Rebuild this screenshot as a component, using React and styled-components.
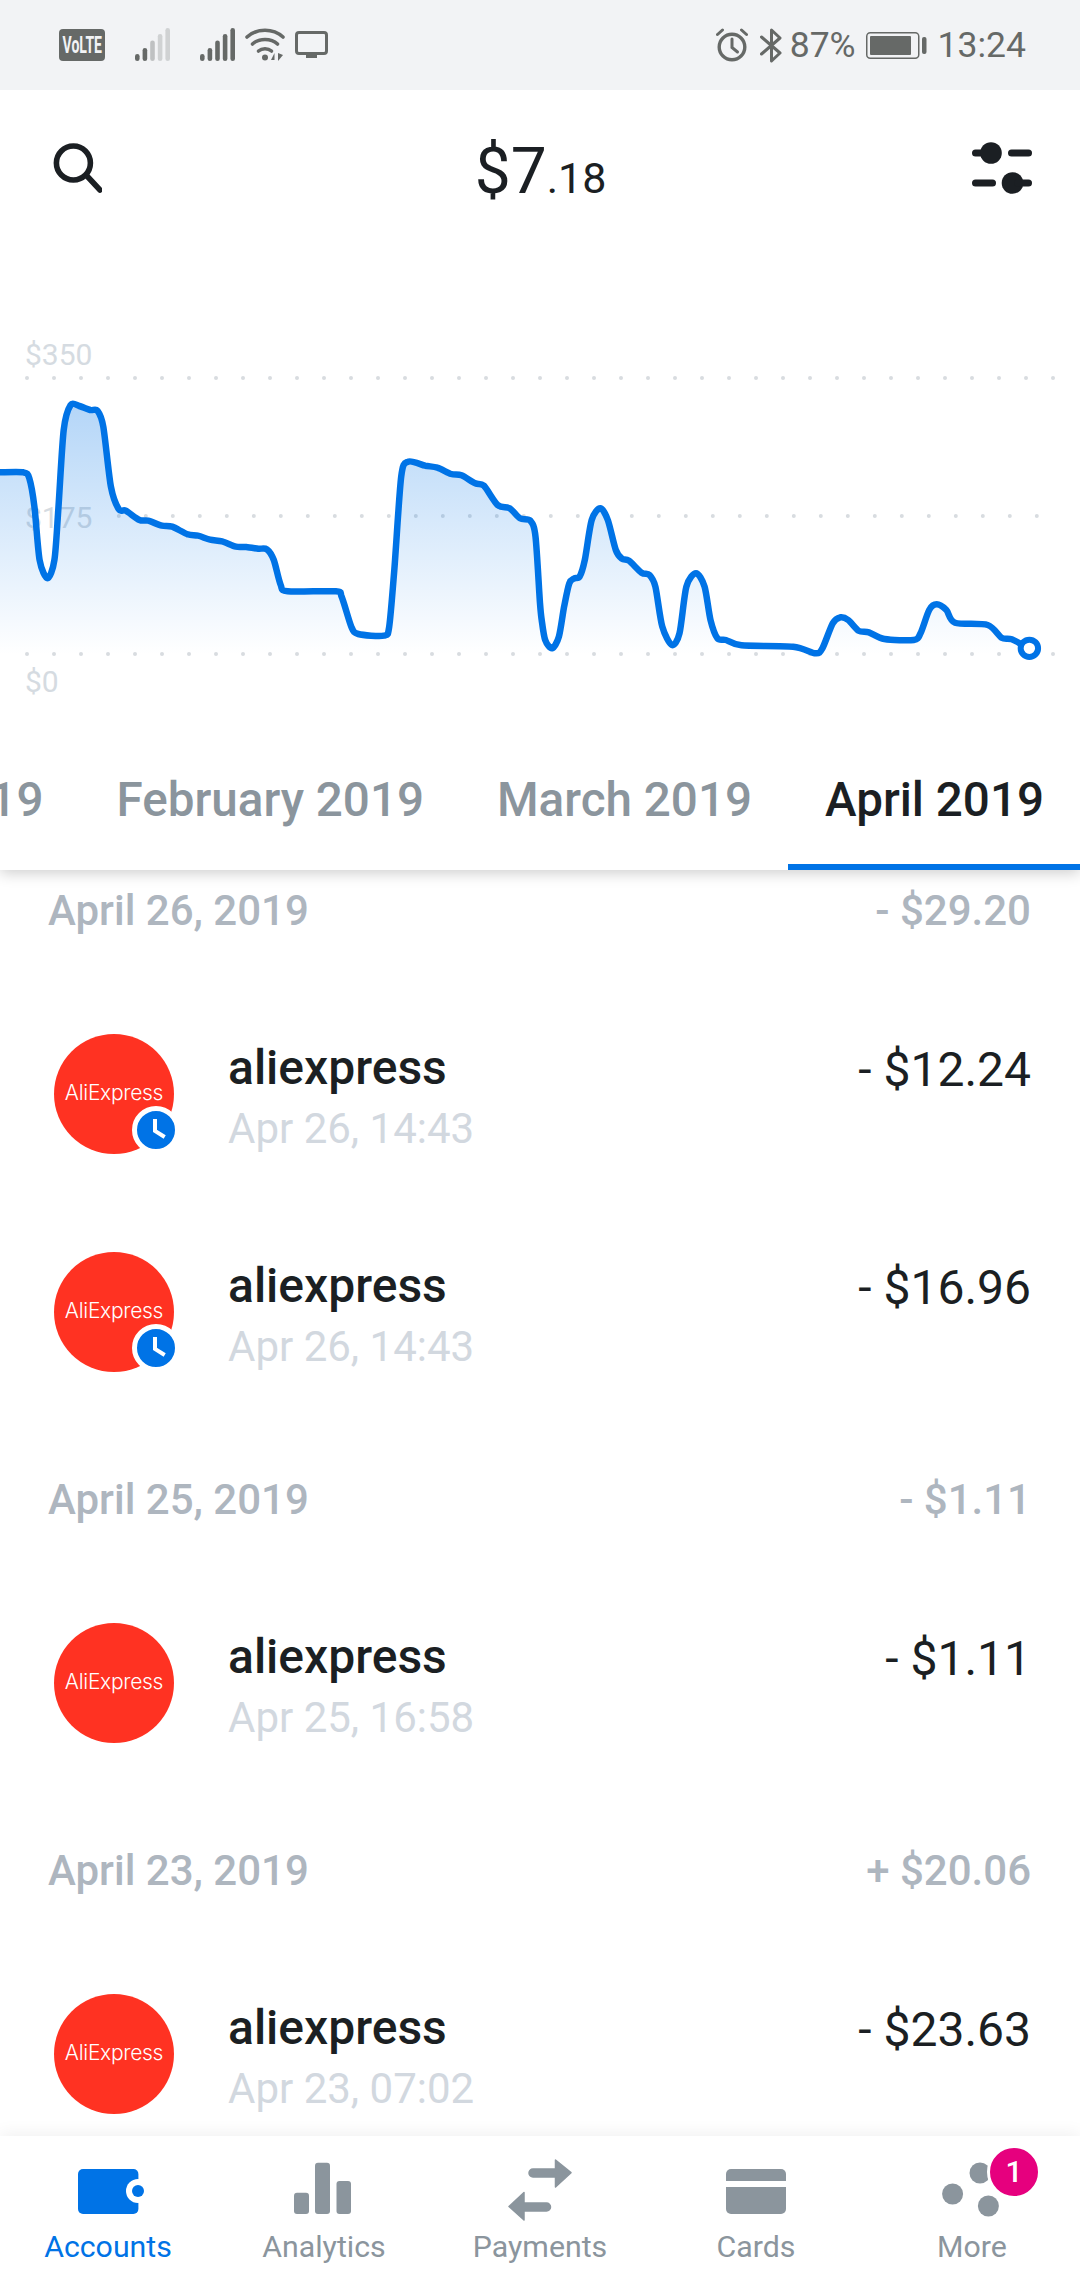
import React from "react";
import styled, { createGlobalStyle } from "styled-components";

const BLUE = "#0073e6";
const DARK = "#1b1f23";
const GREY = "#8b959d";
const ICON = "#666967";

const GlobalStyle = createGlobalStyle`
  html, body {
    margin: 0;
    padding: 0;
    background: #fff;
  }
  * {
    box-sizing: border-box;
  }
`;

const Page = styled.div`
  width: 1080px;
  height: 2280px;
  display: flex;
  flex-direction: column;
  overflow: hidden;
  background: #fff;
  font-family: Roboto, "Liberation Sans", sans-serif;
  color: ${DARK};
`;

/* status bar */
const StatusBar = styled.div`
  flex: none;
  height: 90px;
  display: flex;
  align-items: center;
  justify-content: space-between;
  padding: 0 54px 0 59px;
  background: #f2f3f5;
  color: ${ICON};
`;

const StatusGroup = styled.div`
  display: flex;
  align-items: center;
  gap: ${(p) => p.$gap || 10}px;
`;

const Volte = styled.div`
  width: 46px;
  height: 32px;
  margin-right: 19px;
  border-radius: 4px;
  background: ${ICON};
  color: #f2f3f5;
  display: flex;
  align-items: center;
  justify-content: center;
  font-size: 23px;
  font-weight: 700;
  white-space: nowrap;
  span {
    display: block;
    flex: none;
    transform: scaleX(0.61);
  }
`;

const StatusText = styled.span`
  font-size: 35.5px;
  line-height: 34px;
  margin-left: ${(p) => p.$left || 0}px;
  margin-right: ${(p) => p.$right || 0}px;
`;

const SignalSvg = styled.svg`
  display: block;
  margin-right: ${(p) => p.$right || 0}px;
`;

const Signal = ({ fade, right }) => {
  const tops = [26, 20, 12.5, 6, 0];
  return (
    <SignalSvg width="36" height="34" viewBox="0 0 36 34" $right={right}>
      {tops.map((top, i) => (
        <rect
          key={i}
          x={i * 7.6 + 1}
          y={top}
          width="4.6"
          height={33 - top}
          rx="2.3"
          fill={fade && i > 1 ? (i === 2 ? "#bfc1c2" : "#d0d2d3") : ICON}
        />
      ))}
    </SignalSvg>
  );
};

const Wifi = () => (
  <svg width="40" height="34" viewBox="0 0 40 34" fill="none" stroke={ICON} strokeWidth="3.6" strokeLinecap="round">
    <path d="M2 9 C12 0 28 0 38 9" />
    <path d="M7.5 16 C14 10 26 10 32.5 16" />
    <path d="M13.5 23 C17 20 23 20 26.5 23" />
    <circle cx="20" cy="29.5" r="3" fill={ICON} stroke="none" />
    <path d="M29.5 32 V25 L26 32 Z" fill={ICON} stroke="none" />
    <path d="M33 25 V33 L38 27 Z" fill={ICON} stroke="none" />
  </svg>
);

const Monitor = () => (
  <svg width="33" height="28" viewBox="0 0 33 28" fill="none">
    <rect x="1.5" y="1.5" width="30" height="21" rx="2.5" stroke={ICON} strokeWidth="3" />
    <rect x="11" y="23" width="11" height="4" fill={ICON} />
  </svg>
);

const Alarm = () => (
  <svg width="32" height="34" viewBox="0 0 32 34" fill="none" stroke={ICON} strokeLinecap="round">
    <circle cx="16" cy="19" r="12.8" strokeWidth="3.4" />
    <path d="M16 11 V19.5 L21.5 24" strokeWidth="3" />
    <path d="M1.5 6.5 L6.5 2 M30.5 6.5 L25.5 2" strokeWidth="3" />
  </svg>
);

const Bluetooth = () => (
  <svg width="22" height="35" viewBox="0 0 22 35" fill="none" stroke={ICON} strokeWidth="3" strokeLinejoin="round" strokeLinecap="round">
    <path d="M1.5 9 L20 25 L11.5 33 V2 L20 10 L1.5 26" />
  </svg>
);

const Battery = () => (
  <svg width="61" height="27" viewBox="0 0 61 27" fill="none">
    <rect x="0.75" y="0.75" width="52" height="25.5" rx="3.5" stroke={ICON} strokeWidth="1.5" />
    <rect x="4" y="4" width="41" height="19" rx="1" fill={ICON} />
    <rect x="56" y="5" width="4.5" height="17" rx="2" fill={ICON} />
  </svg>
);

/* header */
const Header = styled.header`
  flex: none;
  height: 156px;
  display: flex;
  align-items: center;
  justify-content: space-between;
  padding: 0 48px 0 50px;
`;

const Balance = styled.div`
  font-size: 64px;
  font-weight: 400;
  line-height: 1;
  color: ${DARK};
  margin: 8px 0 0 7px;
  small {
    font-size: 43px;
    font-weight: 400;
  }
`;

const SearchIcon = () => (
  <svg width="52" height="52" viewBox="0 0 52 52" fill="none" stroke={DARK} strokeWidth="5.6" strokeLinecap="round">
    <circle cx="23.4" cy="21" r="17" />
    <path d="M37 34 L50 48" />
  </svg>
);

const SlidersIcon = () => (
  <svg width="60" height="52" viewBox="0 0 60 52" fill={DARK}>
    <rect x="0" y="7.5" width="20" height="7" rx="3.5" />
    <circle cx="19" cy="11" r="10.8" />
    <rect x="36" y="7.5" width="24" height="7" rx="3.5" />
    <rect x="0" y="37.5" width="24" height="7" rx="3.5" />
    <circle cx="40.5" cy="41" r="10.8" />
    <rect x="42" y="37.5" width="18" height="7" rx="3.5" />
  </svg>
);

/* chart, traced from the reference: x = 0..540 at 2.9037 units a pixel, y from 320 at 3 units a pixel */
const LEFT = [
  [0, 457], [68, 457], [85, 475], [100, 560], [115, 720], [138, 775], [158, 720], [170, 560], [185, 330], [205, 255],
  [230, 258], [262, 270], [283, 272], [300, 320], [322, 500], [345, 568], [365, 572], [405, 600], [430, 602], [470, 617],
  [500, 620], [545, 643], [575, 647], [610, 659], [645, 664], [685, 680], [715, 681], [750, 686], [775, 688], [795, 720],
  [815, 795], [835, 814], [975, 814], [992, 830], [1020, 920], [1040, 942], [1115, 947], [1130, 920], [1145, 750], [1165, 470],
  [1185, 425], [1235, 437], [1270, 443], [1310, 462], [1340, 466], [1380, 490], [1405, 497], [1445, 555], [1480, 565], [1510, 595],
  [1540, 602], [1555, 650], [1568, 850],
];
const RIGHT = [
  [5, 900], [15, 960], [35, 985], [55, 950], [70, 860], [85, 790], [100, 775], [115, 770], [130, 720], [150, 600],
  [175, 565], [197, 600], [220, 690], [238, 716], [258, 722], [295, 758], [318, 765], [335, 800], [355, 920], [383, 975],
  [405, 940], [425, 800], [453, 760], [478, 800], [495, 900], [515, 955], [540, 960], [585, 976], [735, 980], [800, 1000],
  [820, 985], [850, 910], [872, 892], [895, 900], [925, 932], [955, 937], [1000, 957], [1085, 960], [1105, 940], [1130, 870],
  [1152, 853], [1180, 870], [1205, 908], [1300, 915], [1340, 953], [1370, 958], [1421, 985],
];

const points = [
  ...LEFT.map(([x, y]) => [x / 2.9037, 320 + y / 3]),
  ...RIGHT.map(([x, y]) => [540 + x / 2.9037, 320 + y / 3]),
];

const smooth = (pts) => {
  let d = `M${pts[0][0].toFixed(1)} ${pts[0][1].toFixed(1)}`;
  for (let i = 0; i < pts.length - 1; i++) {
    const p0 = pts[i - 1] || pts[i];
    const p1 = pts[i];
    const p2 = pts[i + 1];
    const p3 = pts[i + 2] || p2;
    const k = 0.14;
    const c1x = p1[0] + (p2[0] - p0[0]) * k;
    const c1y = p1[1] + (p2[1] - p0[1]) * k;
    const c2x = p2[0] - (p3[0] - p1[0]) * k;
    const c2y = p2[1] - (p3[1] - p1[1]) * k;
    d += `C${c1x.toFixed(1)} ${c1y.toFixed(1)} ${c2x.toFixed(1)} ${c2y.toFixed(1)} ${p2[0].toFixed(1)} ${p2[1].toFixed(1)}`;
  }
  return d;
};

const linePath = smooth(points);
const lastPoint = points[points.length - 1];
const areaPath = `${linePath}L${lastPoint[0].toFixed(1)} 655L0 655Z`;

const ChartWrap = styled.div`
  flex: none;
  height: 484px;
  svg {
    display: block;
  }
  text {
    font-family: Roboto, "Liberation Sans", sans-serif;
    font-size: 30px;
    fill: #d5dbe1;
  }
`;

const DotRow = ({ y, from, to }) => {
  const dots = [];
  for (let x = from; x <= to; x += 27) dots.push(x);
  return dots.map((x) => <circle key={x} cx={x} cy={y} r="2" fill="#d8dce0" />);
};

const Chart = () => (
  <ChartWrap>
    <svg width="1080" height="484" viewBox="0 246 1080 484">
      <defs>
        <linearGradient id="area" gradientUnits="userSpaceOnUse" x1="0" y1="400" x2="0" y2="655">
          <stop offset="0" stopColor={BLUE} stopOpacity="0.3" />
          <stop offset="1" stopColor={BLUE} stopOpacity="0" />
        </linearGradient>
      </defs>
      <text x="25" y="365">$350</text>
      <text x="25" y="528">$175</text>
      <text x="25" y="692">$0</text>
      <DotRow y={378} from={27} to={1053} />
      <DotRow y={516} from={118.8} to={1037} />
      <DotRow y={654} from={27} to={1053} />
      <path d={areaPath} fill="url(#area)" />
      <path d={linePath} fill="none" stroke={BLUE} strokeWidth="6.5" strokeLinejoin="round" />
      <circle cx={lastPoint[0]} cy={lastPoint[1]} r="8.7" fill="#fff" stroke={BLUE} strokeWidth="6" />
    </svg>
  </ChartWrap>
);

/* month tabs */
const Tabs = styled.div`
  flex: none;
  height: 140px;
  display: flex;
  justify-content: flex-end;
  overflow: hidden;
  position: relative;
  z-index: 2;
  background: #fff;
  box-shadow: 0 3px 14px rgba(0, 0, 0, 0.2);
  clip-path: inset(0 0 -40px 0);
`;

const Tab = styled.div`
  flex: none;
  display: flex;
  align-items: center;
  padding: 6px 36px 0 37px;
  font-size: 47.6px;
  font-weight: 500;
  white-space: nowrap;
  color: ${(p) => (p.$active ? DARK : GREY)};
  border-bottom: 6px solid ${(p) => (p.$active ? BLUE : "transparent")};
`;

/* transactions */
const List = styled.div`
  flex: 1;
  min-height: 0;
  overflow: hidden;
`;

const Scroller = styled.div`
  margin-top: -33.5px;
`;

const GroupHeader = styled.div`
  height: 148px;
  margin-top: ${(p) => (p.$first ? 0 : 5)}px;
  padding: 0 49px 0 48px;
  display: flex;
  align-items: center;
  justify-content: space-between;
  font-size: 42px;
  font-weight: 500;
  color: #aeb6bf;
`;

const Row = styled.div`
  height: 218px;
  padding: 0 49px 0 54px;
  display: flex;
  align-items: center;
`;

const Avatar = styled.div`
  position: relative;
  flex: none;
  width: 120px;
  height: 120px;
  border-radius: 50%;
  background: #ff3222;
  color: #fff;
  display: flex;
  align-items: center;
  justify-content: center;
  font-family: Inter, "Noto Sans", sans-serif;
  font-size: 21px;
  font-weight: 300;
  letter-spacing: -0.3px;
  padding-bottom: 3px;
`;

const Pending = styled.div`
  position: absolute;
  left: 78px;
  top: 72px;
  width: 48px;
  height: 48px;
  border-radius: 50%;
  border: 5px solid #fff;
  background: ${BLUE};
  svg {
    display: block;
  }
`;

const RowText = styled.div`
  flex: 1;
  min-width: 0;
  margin-left: 54px;
  display: flex;
  flex-direction: column;
  gap: 9px;
  padding-top: 8px;
`;

const Name = styled.div`
  font-size: 48px;
  font-weight: 500;
  line-height: 54px;
`;

const When = styled.div`
  font-size: 42px;
  line-height: 50px;
  color: #d2d8df;
`;

const Amount = styled.div`
  align-self: flex-start;
  margin-top: 58px;
  font-size: 48px;
  line-height: 54px;
`;

const ClockHands = () => (
  <svg width="38" height="38" viewBox="0 0 38 38" fill="none" stroke="#fff" strokeWidth="4" strokeLinecap="square">
    <path d="M18 10 V20 L26 25" />
  </svg>
);

const Transaction = ({ when, amount, pending }) => (
  <Row>
    <Avatar>
      AliExpress
      {pending && (
        <Pending>
          <ClockHands />
        </Pending>
      )}
    </Avatar>
    <RowText>
      <Name>aliexpress</Name>
      <When>{when}</When>
    </RowText>
    <Amount>{amount}</Amount>
  </Row>
);

/* bottom navigation */
const Nav = styled.nav`
  flex: none;
  height: 144px;
  display: grid;
  grid-template-columns: repeat(5, 1fr);
  background: #fff;
  position: relative;
  z-index: 2;
  box-shadow: 0 -3px 16px rgba(0, 0, 0, 0.06);
`;

const NavItem = styled.div`
  position: relative;
  display: flex;
  flex-direction: column;
  align-items: center;
  padding-top: 19px;
  font-size: 30.3px;
  line-height: 36px;
  color: ${(p) => (p.$active ? BLUE : GREY)};
  svg {
    display: block;
    margin-bottom: 4px;
  }
`;

const NavBadge = styled.div`
  position: absolute;
  left: 123px;
  top: 9px;
  width: 54px;
  height: 54px;
  border-radius: 50%;
  border: 3.5px solid #fff;
  background: #e6007e;
  color: #fff;
  display: flex;
  align-items: center;
  justify-content: center;
  font-size: 30px;
  font-weight: 500;
`;

const NavIcon = ({ children, color = GREY }) => (
  <svg width="80" height="70" viewBox="0 0 80 70" fill={color}>
    {children}
  </svg>
);

const App = () => (
  <Page>
    <GlobalStyle />
    <StatusBar>
      <StatusGroup $gap={10}>
        <Volte>
          <span>VoLTE</span>
        </Volte>
        <Signal fade right={19} />
        <Signal />
        <Wifi />
        <Monitor />
      </StatusGroup>
      <StatusGroup $gap={12}>
        <Alarm />
        <Bluetooth />
        <StatusText $left={-4} $right={-2}>87%</StatusText>
        <Battery />
        <StatusText $left={-1}>13:24</StatusText>
      </StatusGroup>
    </StatusBar>

    <Header>
      <SearchIcon />
      <Balance>
        $7<small>.18</small>
      </Balance>
      <SlidersIcon />
    </Header>

    <Chart />

    <Tabs>
      <Tab>January 2019</Tab>
      <Tab>February 2019</Tab>
      <Tab>March 2019</Tab>
      <Tab $active>April 2019</Tab>
    </Tabs>

    <List>
      <Scroller>
        <GroupHeader $first>
          <span>April 26, 2019</span>
          <span>- $29.20</span>
        </GroupHeader>
        <Transaction when="Apr 26, 14:43" amount="- $12.24" pending />
        <Transaction when="Apr 26, 14:43" amount="- $16.96" pending />
        <GroupHeader>
          <span>April 25, 2019</span>
          <span>- $1.11</span>
        </GroupHeader>
        <Transaction when="Apr 25, 16:58" amount="- $1.11" />
        <GroupHeader>
          <span>April 23, 2019</span>
          <span>+ $20.06</span>
        </GroupHeader>
        <Transaction when="Apr 23, 07:02" amount="- $23.63" />
      </Scroller>
    </List>

    <Nav>
      <NavItem $active>
        <NavIcon color={BLUE}>
          <rect x="10" y="14" width="60.4" height="45" rx="5" />
          <circle cx="70" cy="36" r="12" fill="#fff" />
          <circle cx="70" cy="36" r="6" />
        </NavIcon>
        Accounts
      </NavItem>
      <NavItem>
        <NavIcon>
          <rect x="10" y="37.7" width="15" height="21.3" rx="3" />
          <rect x="31" y="7.7" width="15" height="51.3" rx="3" />
          <rect x="52.5" y="26" width="14.5" height="33" rx="3" />
        </NavIcon>
        Analytics
      </NavItem>
      <NavItem>
        <NavIcon>
          <path d="M55.5 5 L71 17.7 L55.5 32 V22 H33 a4 4 0 0 1 0 -8 H55.5 Z" stroke={GREY} strokeWidth="1.5" strokeLinejoin="round" />
          <path d="M24 37.5 L9 51.5 L24 65 V56 H46.5 a4 4 0 0 0 0 -8 H24 Z" stroke={GREY} strokeWidth="1.5" strokeLinejoin="round" />
        </NavIcon>
        Payments
      </NavItem>
      <NavItem>
        <NavIcon>
          <path d="M10 26 V19 a5 5 0 0 1 5 -5 H65 a5 5 0 0 1 5 5 V26 Z" />
          <path d="M10 32 H70 V54 a5 5 0 0 1 -5 5 H15 a5 5 0 0 1 -5 -5 Z" />
        </NavIcon>
        Cards
      </NavItem>
      <NavItem>
        <NavIcon>
          <circle cx="20.6" cy="39" r="10.5" />
          <circle cx="56.4" cy="51" r="10.5" />
          <circle cx="48" cy="18" r="10.5" />
        </NavIcon>
        More
        <NavBadge>1</NavBadge>
      </NavItem>
    </Nav>
  </Page>
);

export default App;
